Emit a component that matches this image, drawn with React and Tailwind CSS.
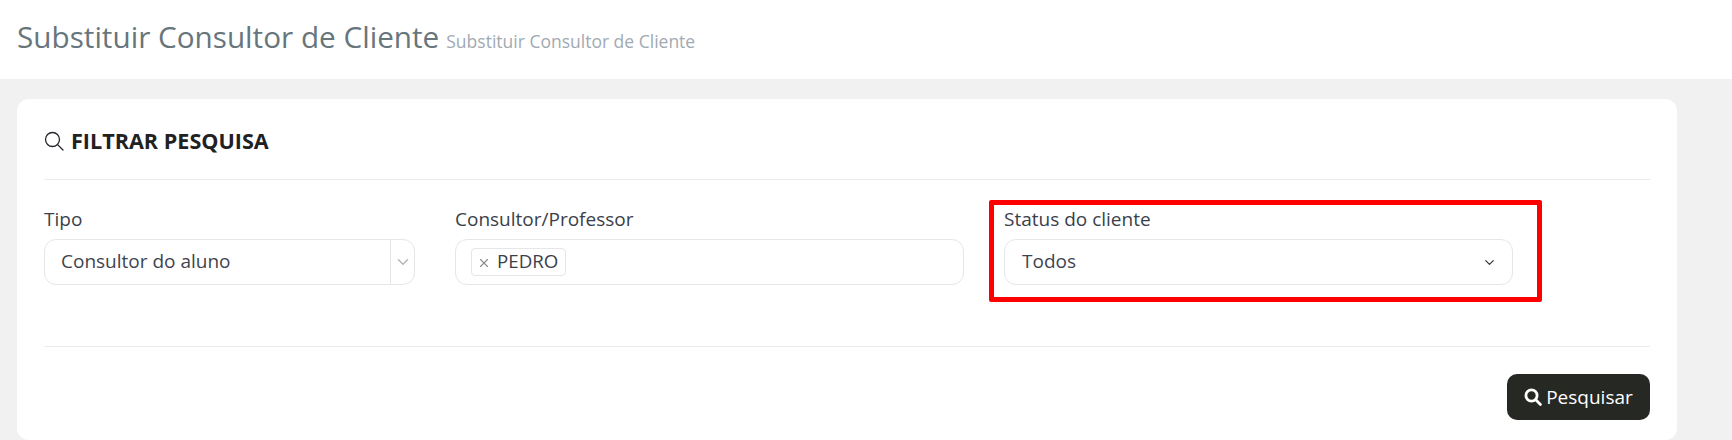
import React from 'react'
import { ChevronDown, X } from 'lucide-react'

const SearchThin = ({ className }) => (
  <svg viewBox="0 0 20 20" fill="none" stroke="currentColor" strokeWidth="1.3" className={className}>
    <circle cx="8.5" cy="8.5" r="7" />
    <path d="M13.6 13.6L19 19" strokeLinecap="round" />
  </svg>
)

const SearchBold = ({ className }) => (
  <svg viewBox="0 0 18 18" fill="none" stroke="currentColor" strokeWidth="2.8" className={className}>
    <circle cx="7.5" cy="7.5" r="5.6" />
    <path d="M11.8 11.8L16.4 16.4" strokeLinecap="round" />
  </svg>
)

const App = () => {
  return (
    <div className="h-[440px] overflow-hidden bg-[#f1f1f1] font-['Open_Sans',sans-serif]">
      {/* Page header */}
      <div className="h-[79px] bg-white pl-[17px] pt-[17px] flex items-baseline">
        <h1 className="text-[29.7px] leading-[40px] text-[#67757c]">Substituir Consultor de Cliente</h1>
        <span className="ml-[7px] text-[17.5px] text-[#a1aab2]">Substituir Consultor de Cliente</span>
      </div>

      {/* Filter card */}
      <div className="relative ml-[17px] mt-[20px] w-[1660px] h-[341px] rounded-[12px] bg-white pl-[27px] pr-[27px]">
        <div className="flex h-[81px] items-center border-b border-[#e9ecef] pt-[4px]">
          <SearchThin className="mr-[7px] h-[20px] w-[20px] text-[#23262b]" />
          <h2 className="text-[21.6px] font-bold text-[#212121]">FILTRAR PESQUISA</h2>
        </div>

        <div className="flex h-[167px] gap-[40px] border-b border-[#e9ecef] pt-[27px]">
          <div className="w-[371px]">
            <label className="block text-[19px] leading-[24px] text-[#3a3f4b]">Tipo</label>
            <div className="mt-[8px] flex h-[46px] items-center rounded-[12px] border border-[#e4e6e8] text-[#3f4450]">
              <span className="flex-1 pb-[2px] pl-[16px] text-[19px]">Consultor do aluno</span>
              <span className="flex h-full w-[24px] items-center justify-center border-l border-[#e4e6e8]">
                <ChevronDown className="h-[18px] w-[18px] text-[#b5b5b5]" />
              </span>
            </div>
          </div>

          <div className="w-[509px]">
            <label className="block text-[19px] leading-[24px] text-[#3a3f4b]">Consultor/Professor</label>
            <div className="mt-[8px] flex h-[46px] items-center rounded-[12px] border border-[#e4e6e8] pl-[15px]">
              <span className="flex h-[28px] items-center rounded-[4px] border border-[#e4e6e8] pb-[2px] pl-[5px] pr-[7px] text-[18.7px] text-[#3a3f4b]">
                <X className="mr-[6px] mt-[4px] h-[14px] w-[14px] text-[#8f8f8f]" />
                PEDRO
              </span>
            </div>
          </div>

          <div className="w-[509px]">
            <label className="block text-[19px] leading-[24px] text-[#3a3f4b]">Status do cliente</label>
            <div className="mt-[8px] flex h-[46px] items-center justify-between rounded-[12px] border border-[#e4e6e8] pl-[17px] pr-[15px] text-[19px] text-[#3f4450]">
              <span className="pb-[2px]">Todos</span>
              <ChevronDown className="h-[15px] w-[15px] text-[#343a40]" />
            </div>
          </div>
        </div>

        <div className="flex justify-end pt-[27px]">
          <button className="flex h-[46px] w-[143px] items-center justify-center rounded-[10px] bg-[#262824] text-[19px] text-white">
            <SearchBold className="mr-[4px] h-[18px] w-[18px]" />
            Pesquisar
          </button>
        </div>

        {/* Red highlight drawn over the screenshot */}
        <div className="absolute left-[972px] top-[101px] h-[102px] w-[553px] rounded-[2px] border-[5px] border-[#ff0000]" />
      </div>
    </div>
  )
}

export default App
